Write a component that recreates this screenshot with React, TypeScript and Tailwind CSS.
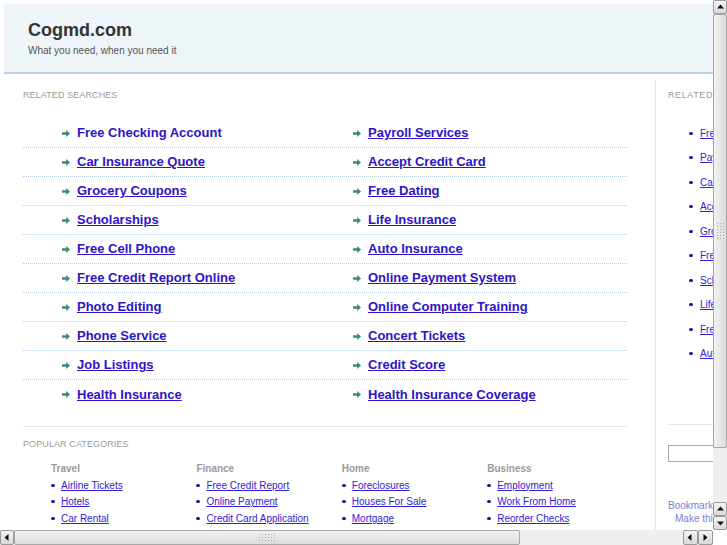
import React from "react";

const leftCol = [
  "Free Checking Account",
  "Car Insurance Quote",
  "Grocery Coupons",
  "Scholarships",
  "Free Cell Phone",
  "Free Credit Report Online",
  "Photo Editing",
  "Phone Service",
  "Job Listings",
  "Health Insurance",
];
const rightCol = [
  "Payroll Services",
  "Accept Credit Card",
  "Free Dating",
  "Life Insurance",
  "Auto Insurance",
  "Online Payment System",
  "Online Computer Training",
  "Concert Tickets",
  "Credit Score",
  "Health Insurance Coverage",
];
const sideList = [
  "Free Checking Account",
  "Payroll Services",
  "Car Insurance Quote",
  "Accept Credit Card",
  "Grocery Coupons",
  "Free Dating",
  "Scholarships",
  "Life Insurance",
  "Free Cell Phone",
  "Auto Insurance",
];
const cats = [
  { t: "Travel", l: ["Airline Tickets", "Hotels", "Car Rental"] },
  { t: "Finance", l: ["Free Credit Report", "Online Payment", "Credit Card Application"] },
  { t: "Home", l: ["Foreclosures", "Houses For Sale", "Mortgage"] },
  { t: "Business", l: ["Employment", "Work From Home", "Reorder Checks"] },
];

function Arrow() {
  return (
    <svg width="8" height="7" viewBox="0 0 8 7" className="shrink-0">
      <path d="M0 2.2h4.2V0 L8 3.5 4.2 7V4.8H0z" fill="#3a8a7c" />
    </svg>
  );
}

function Bullet() {
  return <span className="inline-block w-[4px] h-[3px] rounded-full bg-[#1a1a9a] shrink-0" />;
}

function Tri({ dir }: { dir: "up" | "down" | "left" | "right" }) {
  const d =
    dir === "up"
      ? "M1 5.5L4.5 1.5 8 5.5z"
      : dir === "down"
      ? "M1 2.5L4.5 6.5 8 2.5z"
      : dir === "left"
      ? "M5.5 1L1.5 4.5 5.5 8z"
      : "M2.5 1L6.5 4.5 2.5 8z";
  return (
    <svg width="9" height="9" viewBox="0 0 9 9">
      <path d={d} fill="#111" />
    </svg>
  );
}

function Btn({ dir, cls }: { dir: "up" | "down" | "left" | "right"; cls: string }) {
  return (
    <div
      className={`${cls} flex items-center justify-center bg-gradient-to-b from-[#f4f4f4] to-[#d9d9d9] border border-[#9a9a9a] rounded-[2px]`}
    >
      <Tri dir={dir} />
    </div>
  );
}

function Grip({ vertical }: { vertical: boolean }) {
  const dots = [];
  for (let i = 0; i < 18; i++) dots.push(<span key={i} className="w-[1px] h-[1px] bg-[#a8a8a8]" />);
  return (
    <div
      className={
        vertical
          ? "grid grid-cols-3 gap-x-[2px] gap-y-[2px]"
          : "grid grid-cols-6 gap-x-[2px] gap-y-[2px]"
      }
    >
      {dots}
    </div>
  );
}

export default function App() {
  const font = { fontFamily: '"Liberation Sans", Arial, sans-serif' };
  return (
    <div className="w-[727px] h-[545px] overflow-hidden flex flex-col bg-white" style={font}>
      <div className="flex h-[530px]">
        {/* page viewport */}
        <div className="w-[713px] h-[530px] overflow-hidden bg-white">
          <div className="w-[1000px] pl-[4px] pt-[4px]">
            {/* header */}
            <div className="h-[70px] bg-[#eef5f8] border-b-2 border-[#bcd0ea] pl-[24px] pt-[15px]">
              <div className="text-[18px] leading-[22px] font-bold text-[#333]">Cogmd.com</div>
              <div className="text-[10px] leading-[13px] text-[#555] mt-[3px]">
                What you need, when you need it
              </div>
            </div>
            {/* main */}
            <div className="flex mt-[6px]">
              <div className="w-[651px] pl-[19px] pt-[9px]">
                <div className="text-[9px] leading-[12px] text-[#9a9a9a] uppercase tracking-[0.1px]">
                  Related Searches
                </div>
                <div className="mt-[18px] w-[604px]">
                  {leftCol.map((l, i) => (
                    <div
                      key={l}
                      className={`flex items-center h-[29px] pl-[39px] ${
                        i < leftCol.length - 1 ? "border-b border-dotted border-[#b7cde6]" : ""
                      }`}
                    >
                      <div className="w-[291px] flex items-center gap-[7px]">
                        <Arrow />
                        <a
                          className={`text-[13px] font-bold text-[#2d14c9] ${i === 0 ? "" : "underline"}`}
                        >
                          {l}
                        </a>
                      </div>
                      <div className="flex items-center gap-[7px]">
                        <Arrow />
                        <a className="text-[13px] font-bold text-[#2d14c9] underline">{rightCol[i]}</a>
                      </div>
                    </div>
                  ))}
                </div>
                <div className="mt-[17px] w-[604px] border-t border-[#dfe9f4]" />
                <div className="mt-[11px] text-[9px] leading-[12px] text-[#9a9a9a] uppercase tracking-[0.1px]">
                  Popular Categories
                </div>
                <div className="flex pl-[28px] mt-[12px]">
                  {cats.map((c) => (
                    <div key={c.t} className="w-[145.4px]">
                      <div className="text-[10px] leading-[14px] font-bold text-[#9a9a9a]">{c.t}</div>
                      <div className="mt-[1px]">
                        {c.l.map((x) => (
                          <div key={x} className="flex items-center h-[16.5px] gap-[6px]">
                            <Bullet />
                            <a className="text-[10px] text-[#3020d8] underline">{x}</a>
                          </div>
                        ))}
                      </div>
                    </div>
                  ))}
                </div>
              </div>
              {/* right panel */}
              <div className="w-[300px] h-[460px] border-l border-[#dbe6f2] pl-[12px] pt-[9px]">
                <div className="text-[9px] leading-[12px] text-[#9a9a9a] uppercase tracking-[0.6px]">
                  Related Searches
                </div>
                <div className="mt-[20px] pl-[21px]">
                  {sideList.map((x, i) => (
                    <div key={i} className="flex items-center h-[24.5px] gap-[7px]">
                      <Bullet />
                      <a className="text-[10px] text-[#3020d8] underline">{x}</a>
                    </div>
                  ))}
                </div>
                <div className="mt-[58px] border-t border-[#dfe9f4] w-[200px]" />
                <div className="mt-[20px] h-[17px] w-[150px] border border-[#a9a9a9] bg-white" />
                <div className="mt-[37px] text-[10px] leading-[13px] text-[#8080cc]">Bookmark this page</div>
                <div className="pl-[7px] text-[10px] leading-[13px] text-[#8080cc]">Make this your homepage</div>
              </div>
            </div>
          </div>
        </div>
        {/* vertical scrollbar */}
        <div className="w-[14px] h-[530px] flex flex-col bg-[#ececec]">
          <Btn dir="up" cls="h-[14px] w-[14px]" />
          <div className="h-[434px] bg-gradient-to-r from-[#f2f2f2] to-[#dcdcdc] border border-[#a8a8a8] rounded-[2px] flex items-center justify-center">
            <Grip vertical />
          </div>
          <div className="flex-1 bg-[#efefef]" />
          <Btn dir="up" cls="h-[14px] w-[14px]" />
          <Btn dir="down" cls="h-[14px] w-[14px]" />
        </div>
      </div>
      {/* horizontal scrollbar */}
      <div className="h-[15px] flex bg-[#ececec]">
        <Btn dir="left" cls="w-[14px] h-[15px]" />
        <div className="w-[506px] bg-gradient-to-b from-[#f2f2f2] to-[#dcdcdc] border border-[#a8a8a8] rounded-[2px] flex items-center justify-center">
          <Grip vertical={false} />
        </div>
        <div className="w-[163px] bg-[#efefef]" />
        <Btn dir="left" cls="w-[15px] h-[15px]" />
        <Btn dir="right" cls="w-[15px] h-[15px]" />
        <div className="flex-1 bg-white" />
      </div>
    </div>
  );
}
